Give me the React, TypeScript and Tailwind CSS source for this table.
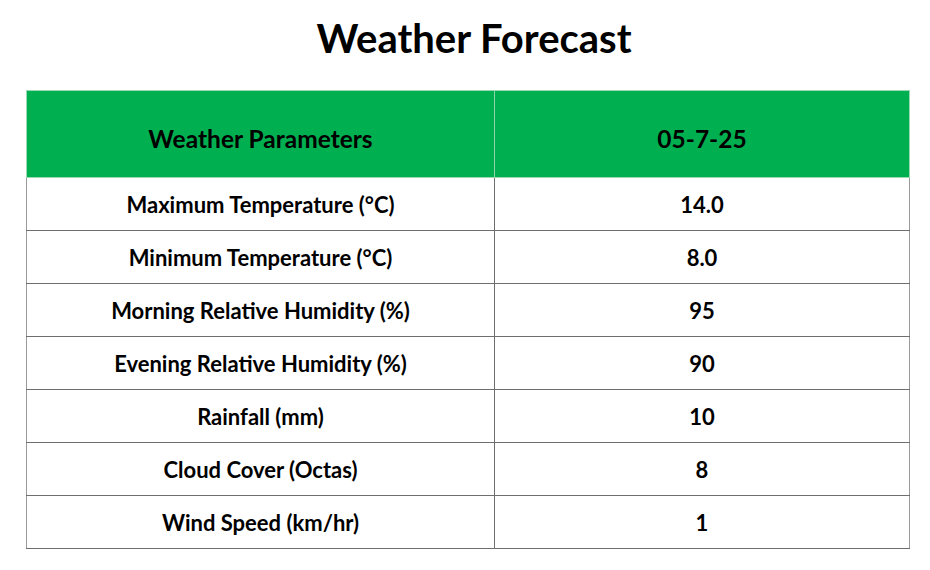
const rows: [string, string][] = [
  ['Maximum Temperature (°C)', '14.0'],
  ['Minimum Temperature (°C)', '8.0'],
  ['Morning Relative Humidity (%)', '95'],
  ['Evening Relative Humidity (%)', '90'],
  ['Rainfall (mm)', '10'],
  ['Cloud Cover (Octas)', '8'],
  ['Wind Speed (km/hr)', '1'],
];

export default function App() {
  return (
    <div className="w-[930px] h-[570px] bg-white text-black font-['Lato','Liberation_Sans',sans-serif] font-bold">
      <h1 className="pt-[15px] pl-[18px] h-[90px] text-center text-[40px] leading-[46px]">Weather Forecast</h1>
      <table className="ml-[26px] border-collapse table-fixed w-[883px]">
        <colgroup>
          <col className="w-[468px]" />
          <col className="w-[415px]" />
        </colgroup>
        <thead>
          <tr className="h-[87px] bg-[#00b050] text-[24.5px]">
            <th className="border border-[#9ad9b4] border-r-[#8fd4ac] pt-[11px] font-bold">Weather Parameters</th>
            <th className="border border-[#9ad9b4] pt-[11px] font-bold">05-7-25</th>
          </tr>
        </thead>
        <tbody className="text-[22px]">
          {rows.map(([label, value]) => (
            <tr key={label} className="h-[53px]">
              <td className="border border-[#6e6e6e] border-l-[#9a9a9a] text-center">{label}</td>
              <td className="border border-[#6e6e6e] border-r-[#9a9a9a] text-center">{value}</td>
            </tr>
          ))}
        </tbody>
      </table>
    </div>
  );
}
